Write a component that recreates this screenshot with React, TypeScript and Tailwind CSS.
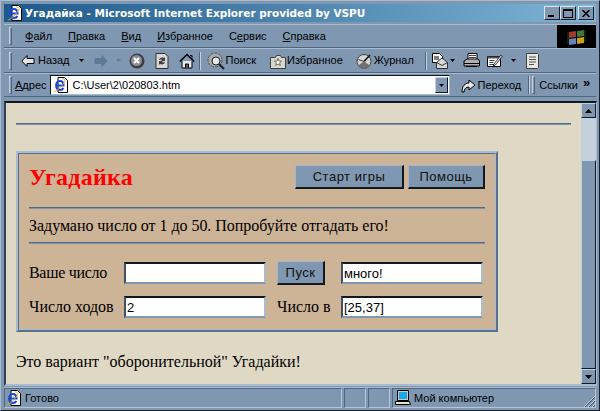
import React from "react";

const Sunken = "border border-t-[#4f6580] border-l-[#4f6580] border-r-[#b6c6d6] border-b-[#b6c6d6]";

function Ie({ size = 16 }: { size?: number }) {
  return (
    <svg width={size} height={size} viewBox="0 0 16 16" className="shrink-0">
      <path d="M5 .5h6.500l3 3v12H5z" fill="#fff" stroke="#000" strokeWidth="1" />
      <path d="M3.300 8.500h7.200c0-3-1.500-4.500-3.600-4.500S3.200 6 3.200 8.500 4.800 13 7 13c1.600 0 2.700-.7 3.300-2" fill="none" stroke="#1848d8" strokeWidth="2.200" />
      <path d="M.8 14.500C2 15.500 8 11 11.500 5c1-2 .5-3.500-2.500-3" fill="none" stroke="#e8a818" strokeWidth="1" />
    </svg>
  );
}

function Grip() {
  return <div className="w-[3px] h-[18px] shrink-0 border border-t-[#c3d0dd] border-l-[#c3d0dd] border-r-[#4f6580] border-b-[#4f6580]" />;
}

function Sep() {
  return <div className="w-[2px] h-[18px] shrink-0 border-l border-l-[#4f6580] border-r border-r-[#c3d0dd]" />;
}

function Caret({ color = "#000" }: { color?: string }) {
  return (
    <svg width="5" height="3" viewBox="0 0 5 3" className="shrink-0">
      <path d="M0 0h5L2.500 3z" fill={color} />
    </svg>
  );
}

function Back({ color = "#000", fill = "#e4e4e4", flip = false }: { color?: string; fill?: string; flip?: boolean }) {
  return (
    <svg width="14" height="12" viewBox="0 0 14 12" className="shrink-0" style={flip ? { transform: "scaleX(-1)" } : undefined}>
      <path d="M6 .5v3h7v5H6v3L.8 6z" fill={fill} stroke={color} />
    </svg>
  );
}

function Stop() {
  return (
    <svg width="16" height="16" viewBox="0 0 16 16" className="shrink-0">
      <circle cx="8" cy="8" r="7.500" fill="#3d3d45" />
      <circle cx="7.500" cy="7.500" r="5.500" fill="#8f8f96" />
      <path d="M5 5l5 5M10 5l-5 5" stroke="#fff" strokeWidth="2" />
    </svg>
  );
}

function Refresh() {
  return (
    <svg width="14" height="16" viewBox="0 0 14 16" className="shrink-0">
      <path d="M1 .5h9l3 3v12H1z" fill="#d8d8d8" stroke="#303030" />
      <path d="M4 7c0-2 3-3 5-2l1-1v4H6l1-1c-1-1-2 0-3 0zM10 9c0 2-3 3-5 2l-1 1V8h4l-1 1c1 1 2 0 3 0z" fill="#404040" />
    </svg>
  );
}

function Home() {
  return (
    <svg width="16" height="16" viewBox="0 0 16 16" className="shrink-0">
      <path d="M3 8v7h10V8" fill="#e8e8e8" stroke="#000" />
      <path d="M.8 8.500L8 1.500l7.200 7" fill="none" stroke="#000" strokeWidth="1.500" />
      <path d="M6.500 15v-4h3v4" fill="#606060" stroke="#000" />
      <path d="M11 2.500h2v3" fill="#808080" stroke="#000" />
    </svg>
  );
}

function Search() {
  return (
    <svg width="18" height="18" viewBox="0 0 18 18" className="shrink-0">
      <circle cx="8" cy="8" r="7" fill="#a8a8a8" stroke="#505050" strokeDasharray="3 1" />
      <circle cx="9" cy="9" r="4" fill="#dfe7ef" stroke="#202020" />
      <path d="M12 12l5 5" stroke="#202020" strokeWidth="2.200" />
    </svg>
  );
}

function Favorites() {
  return (
    <svg width="16" height="16" viewBox="0 0 16 16" className="shrink-0">
      <path d="M.5 4.500h5l1-2h4l1 2h4v11H.5z" fill="#d8d8c8" stroke="#404040" />
      <path d="M8 5.500l1 2.500 2.600.2-2 1.600.7 2.600L8 11l-2.300 1.400.7-2.600-2-1.600 2.600-.2z" fill="#fff" stroke="#404040" strokeWidth=".7" />
    </svg>
  );
}

function History() {
  return (
    <svg width="18" height="16" viewBox="0 0 18 16" className="shrink-0">
      <circle cx="9" cy="8.500" r="7" fill="#d4d4d4" stroke="#404040" />
      <path d="M9 8.500L15 2" stroke="#101010" strokeWidth="1.600" />
      <path d="M9 8.500L3.500 6.500" stroke="#404040" />
      <path d="M3 12.500a7 7 0 0 0 12 0L9 8.500z" fill="#707070" />
    </svg>
  );
}

function Mail() {
  return (
    <svg width="16" height="16" viewBox="0 0 16 16" className="shrink-0">
      <path d="M.5.5h7l3 3v6H.5z" fill="#fff" stroke="#000" />
      <path d="M2 4h5M2 6h5" stroke="#000" />
      <path d="M4.500 9.500L10 5l5.500 4.500v6h-11z" fill="#d8d8d8" stroke="#303030" />
      <path d="M4.500 9.500l5.500 3 5.500-3" fill="none" stroke="#303030" />
    </svg>
  );
}

function Print() {
  return (
    <svg width="17" height="16" viewBox="0 0 17 16" className="shrink-0">
      <path d="M5 .5h9v6H5z" fill="#fff" stroke="#000" />
      <path d="M6 2.500h7M6 4.500h7" stroke="#404040" />
      <path d="M1 8l3-2h11l1.500 2v5H1z" fill="#b0b0b0" stroke="#000" />
      <path d="M1 10.500h15.500M3 13.500h11" stroke="#000" />
    </svg>
  );
}

function Edit() {
  return (
    <svg width="16" height="14" viewBox="0 0 16 14" className="shrink-0">
      <path d="M.5 2.500h13v10H.5z" fill="#fff" stroke="#000" />
      <path d="M.5 2.500h13v2H.5z" fill="#505050" />
      <path d="M2.500 6.500h5M2.500 8.500h4M2.500 10.500h5" stroke="#404040" />
      <path d="M7 10l7-9 1.500 1-7 9-2 1z" fill="#e0e0e0" stroke="#000" strokeWidth=".7" />
    </svg>
  );
}

function Doc() {
  return (
    <svg width="14" height="16" viewBox="0 0 14 16" className="shrink-0">
      <path d="M1.500.5h11l1 1v13l-1 1h-11z" fill="#e8e8e0" stroke="#404040" />
      <path d="M4 4h7M4 6.500h7M4 9h7M4 11.500h5" stroke="#505050" />
    </svg>
  );
}

function Go() {
  return (
    <svg width="16" height="16" viewBox="0 0 16 16" className="shrink-0">
      <path d="M2 15c0-6 3-9 7-9V3l6 5-6 5v-3c-3 0-5 2-5 5z" fill="#e8e8e8" stroke="#000" />
    </svg>
  );
}

function WinFlag() {
  return (
    <svg width="20" height="16" viewBox="0 0 20 16" className="shrink-0">
      <path d="M2 3l7-1v6L2 9z" fill="#a03a2a" />
      <path d="M10 2l7-1v6l-7 1z" fill="#3f7a34" />
      <path d="M2 10l7-1v6l-7 1z" fill="#6a86b8" />
      <path d="M10 9l7-1v6l-7 1z" fill="#c9a020" />
      <path d="M1 3v12M18 1v12" stroke="#27401f" strokeWidth="1" />
    </svg>
  );
}

function Pc() {
  return (
    <svg width="16" height="16" viewBox="0 0 16 16" className="shrink-0">
      <path d="M2.500.5h11v10h-11z" fill="#c8c8c8" stroke="#000" />
      <path d="M4 2h8v7H4z" fill="#18a8e8" />
      <path d="M.5 11.500h14l1 3H.5z" fill="#e8e8c0" stroke="#000" />
    </svg>
  );
}

function ToolLabel({ children, className = "" }: { children: React.ReactNode; className?: string }) {
  return <span className={`text-[11px] leading-none text-black ${className}`}>{children}</span>;
}

function WinBtn({ children }: { children: React.ReactNode }) {
  return (
    <div className="w-[16px] h-[14px] flex items-center justify-center bg-[#7f97b1] border border-t-[#dfe6ee] border-l-[#dfe6ee] border-r-[#18212b] border-b-[#18212b]">
      {children}
    </div>
  );
}

function GameButton({ children, className }: { children: React.ReactNode; className: string }) {
  return (
    <div className={`h-[24px] flex items-center justify-center bg-[#7f97b1] border border-t-[#a3b6ca] border-l-[#a3b6ca] border-r-2 border-b-2 border-r-[#101820] border-b-[#101820] font-['Liberation_Sans',sans-serif] tracking-[0.5px] text-[13px] leading-none text-[#101010] ${className}`}>
      {children}
    </div>
  );
}

function Field({ value = "" }: { value?: string }) {
  return (
    <div className="w-[142px] h-[22px] flex items-center px-[1px] bg-white border-2 border-t-[#0f1720] border-l-[#3f5268] border-r-[#a9bccf] border-b-[#7f97b1] font-['Liberation_Sans',sans-serif] text-[13px] leading-none text-black">
      {value}
    </div>
  );
}

function Rule({ className = "" }: { className?: string }) {
  return <div className={`h-[2px] bg-[#4f6a8a] border-b border-b-[#7f93a8] ${className}`} />;
}

export default function App() {
  return (
    <div className="w-[600px] h-[411px] overflow-hidden bg-[#7f97b1] font-['Liberation_Sans',sans-serif] border border-t-[#a9bccf] border-l-[#a9bccf] border-r-[#18212b] border-b-[#18212b] flex flex-col px-[3px] pt-[3px] pb-[2px]">
      {/* Title bar */}
      <div className="h-[18px] shrink-0 flex items-center pl-[3px] pr-[2px] gap-[2px] bg-gradient-to-r from-[#1c5a8c] to-[#7fb4d4]">
        <Ie />
        <span className="flex-1 text-white font-bold text-[10.5px] leading-none font-['DejaVu_Sans',sans-serif] whitespace-nowrap">
          Угадайка - Microsoft Internet Explorer provided by VSPU
        </span>
        <div className="flex">
          <WinBtn><div className="w-[6px] h-[2px] bg-black mt-[6px] -ml-[2px]" /></WinBtn>
          <WinBtn><div className="w-[10px] h-[9px] border border-black border-t-2" /></WinBtn>
          <div className="ml-[2px]">
            <WinBtn>
              <svg width="8" height="7" viewBox="0 0 8 7"><path d="M.5 0l7 7M7.500 0l-7 7" stroke="#000" strokeWidth="1.500" /></svg>
            </WinBtn>
          </div>
        </div>
      </div>

      {/* Menu */}
      <div className="h-[24px] shrink-0 mt-[2px] flex items-stretch border-t border-t-[#a9bccf]">
        <div className="flex-1 flex items-center pl-[5px] border-b border-b-[#4f6580]">
          <Grip />
          <div className="flex items-center gap-[16px] ml-[13px] text-[11px] text-black leading-none">
            <span><u>Ф</u>айл</span>
            <span><u>П</u>равка</span>
            <span><u>В</u>ид</span>
            <span><u>И</u>збранное</span>
            <span>С<u>е</u>рвис</span>
            <span><u>С</u>правка</span>
          </div>
        </div>
        <div className="w-[39px] bg-black flex items-center justify-center ml-[1px]">
          <WinFlag />
        </div>
      </div>

      {/* Toolbar */}
      <div className="h-[25px] shrink-0 flex items-center pl-[5px] border-t border-t-[#a9bccf] border-b border-b-[#4f6580]">
        <Grip />
        <div className="flex items-center ml-[9px]">
          <Back />
          <ToolLabel className="ml-[3px]">Назад</ToolLabel>
          <span className="ml-[9px]"><Caret /></span>
          <span className="ml-[10px]"><Back color="#5f7894" fill="#5f7894" flip /></span>
          <span className="ml-[8px]"><Caret color="#5f7894" /></span>
          <span className="ml-[8px]"><Stop /></span>
          <span className="ml-[10px]"><Refresh /></span>
          <span className="ml-[10px]"><Home /></span>
          <span className="ml-[4px] mr-[6px]"><Sep /></span>
          <Search />
          <ToolLabel className="ml-[1px]">Поиск</ToolLabel>
          <span className="ml-[14px]"><Favorites /></span>
          <ToolLabel className="ml-[1px]">Избранное</ToolLabel>
          <span className="ml-[12px]"><History /></span>
          <ToolLabel className="ml-[1px]">Журнал</ToolLabel>
          <span className="ml-[11px] mr-[5px]"><Sep /></span>
          <Mail />
          <span className="ml-[2px]"><Caret /></span>
          <span className="ml-[8px]"><Print /></span>
          <span className="ml-[7px]"><Edit /></span>
          <span className="ml-[8px]"><Caret /></span>
          <span className="ml-[9px]"><Doc /></span>
        </div>
      </div>

      {/* Address */}
      <div className="h-[24px] shrink-0 flex items-center pl-[5px] border-t border-t-[#a9bccf] border-b border-b-[#4f6580]">
        <Grip />
        <span className="ml-[3px] text-[11px] leading-none text-black"><u>А</u>дрес</span>
        <div className="ml-[3px] w-[400px] h-[20px] flex items-center bg-white border border-t-[#101820] border-l-[#101820] border-r-[#a9bccf] border-b-[#a9bccf]">
          <span className="ml-[2px]"><Ie /></span>
          <span className="ml-[4px] flex-1 text-[11px] leading-none text-black">C:\User\2\020803.htm</span>
          <div className="w-[13px] h-[16px] flex items-center justify-center bg-[#7f97b1] border border-t-[#c3d0dd] border-l-[#c3d0dd] border-r-[#101820] border-b-[#101820] mr-[1px]">
            <Caret />
          </div>
        </div>
        <span className="ml-[10px]"><Go /></span>
        <ToolLabel className="ml-[2px]">Переход</ToolLabel>
        <span className="ml-[7px]"><Sep /></span>
        <span className="ml-[2px]"><Grip /></span>
        <span className="ml-[4px] text-[11px] leading-none text-black">Ссылки</span>
        <span className="ml-[5px] -mt-[5px] text-[13px] leading-none font-bold text-black">»</span>
      </div>

      {/* Content */}
      <div className="mt-[4px] -mr-[1px] flex-1 min-h-0 flex border-2 border-r border-t-[#101820] border-l-[#2f4052] border-r-[#a9bccf] border-b-[#a9bccf]">
        <div className="flex-1 min-w-0 bg-[#dfd8c4] pl-[10px] pr-[10px] pt-[20px] font-['Liberation_Serif',serif] text-[16px] leading-none text-black">
          <Rule />
          <div className="mt-[26px] w-[482px] h-[181px] border-2 border-t-[#a9bccf] border-l-[#a9bccf] border-r-[#56718f] border-b-[#56718f]">
            <div className="h-full border border-t-[#56718f] border-l-[#56718f] border-r-[#a9bccf] border-b-[#a9bccf] bg-[#cdb497] px-[10px]">
              <div className="h-[53px] pb-[8px] flex items-center justify-between">
                <span className="text-[24px] font-bold text-[#ff0000] leading-none tracking-[0.25px]">Угадайка</span>
                <div className="flex gap-[4px]">
                  <GameButton className="w-[109px]">Старт игры</GameButton>
                  <GameButton className="w-[77px]">Помощь</GameButton>
                </div>
              </div>
              <Rule />
              <div className="h-[33px] flex items-center whitespace-nowrap tracking-[-0.04px]">Задумано число от 1 до 50. Попробуйте отгадать его!</div>
              <Rule />
              <div className="mt-[17px] flex items-center h-[24px]">
                <span className="w-[95px] tracking-[-0.3px]">Ваше число</span>
                <Field />
                <GameButton className="ml-[11px] w-[48px]">Пуск</GameButton>
                <span className="ml-[16px]"><Field value="много!" /></span>
              </div>
              <div className="mt-[10px] flex items-center h-[24px]">
                <span className="w-[95px] whitespace-nowrap">Число ходов</span>
                <Field value="2" />
                <span className="ml-[11px] w-[64px]">Число в</span>
                <Field value="[25,37]" />
              </div>
            </div>
          </div>
          <div className="mt-[22px] whitespace-nowrap">Это вариант "оборонительной" Угадайки!</div>
        </div>

        {/* Scrollbar */}
        <div className="w-[15px] shrink-0 flex flex-col bg-[#c4d0dc]">
          <div className="w-[15px] h-[15px] flex items-center justify-center bg-[#7f97b1] border border-t-[#c3d0dd] border-l-[#c3d0dd] border-r-[#101820] border-b-[#101820]">
            <svg width="7" height="4" viewBox="0 0 7 4"><path d="M3.500 0L7 4H0z" fill="#000" /></svg>
          </div>
          <div className="h-[42px]" />
          <div className="flex-1 bg-[#7f97b1] border border-t-[#c3d0dd] border-l-[#c3d0dd] border-r-[#101820] border-b-[#101820]" />
          <div className="w-[15px] h-[15px] flex items-center justify-center bg-[#7f97b1] border border-t-[#c3d0dd] border-l-[#c3d0dd] border-r-[#101820] border-b-[#101820]">
            <svg width="7" height="4" viewBox="0 0 7 4"><path d="M0 0h7L3.500 4z" fill="#000" /></svg>
          </div>
        </div>
      </div>

      {/* Status bar */}
      <div className="h-[21px] shrink-0 mt-[1px] flex items-stretch border-t border-t-[#a9bccf] text-[11px] leading-none text-black">
        <div className={`flex-1 flex items-center gap-[3px] pl-[1px] ${Sunken}`}>
          <Ie />
          <span>Готово</span>
        </div>
        <div className={`w-[22px] ml-[2px] ${Sunken}`} />
        <div className={`w-[22px] ml-[2px] ${Sunken}`} />
        <div className={`w-[204px] ml-[2px] flex items-center gap-[3px] pl-[2px] ${Sunken}`}>
          <Pc />
          <span>Мой компьютер</span>
          <svg width="12" height="12" viewBox="0 0 12 12" className="ml-auto self-end">
            <path d="M1 12L12 1M5 12l7-7M9 12l3-3" stroke="#c3d0dd" strokeWidth="1" />
            <path d="M2 12L12 2M6 12l6-6M10 12l2-2" stroke="#3f5268" strokeWidth="1" />
          </svg>
        </div>
      </div>
    </div>
  );
}
